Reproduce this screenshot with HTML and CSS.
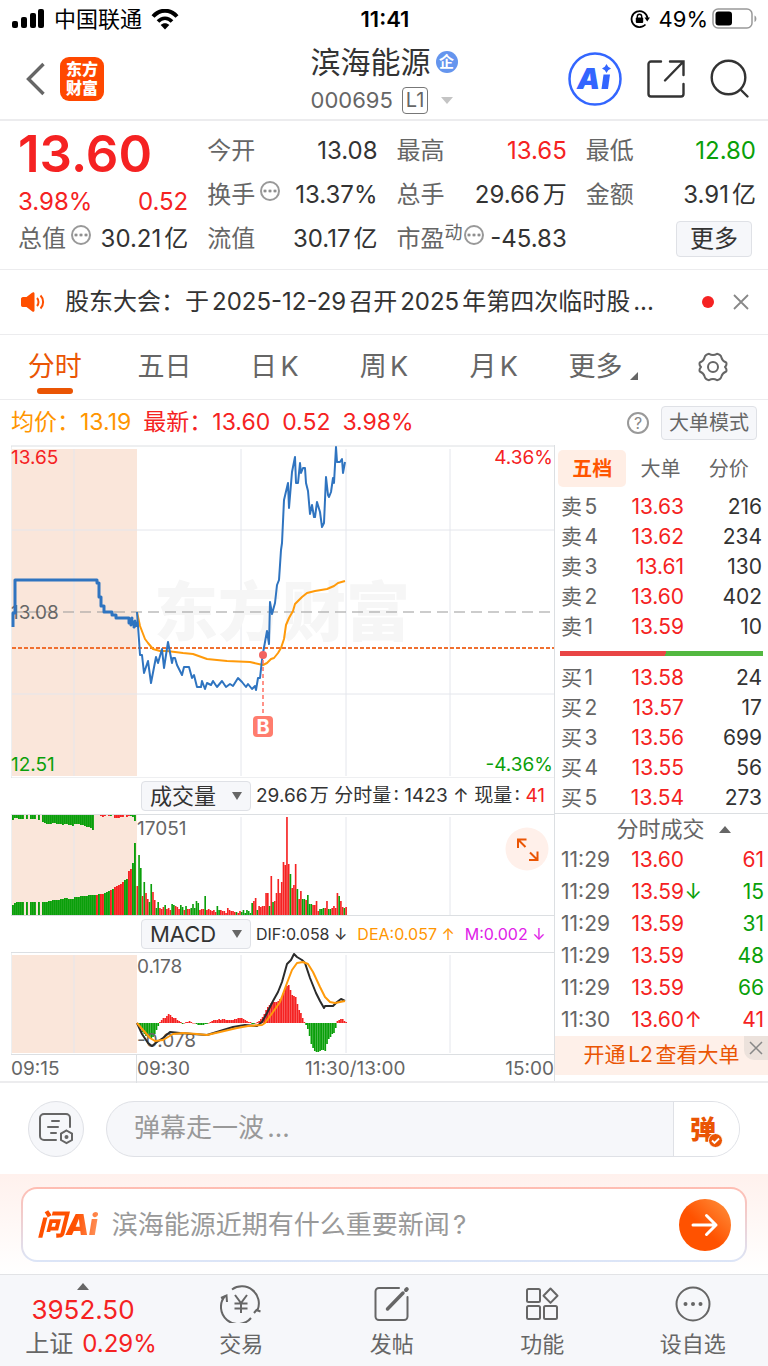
FILE: index.html
```
<!DOCTYPE html>
<html lang="zh-CN">
<head>
    <meta charset="UTF-8">
    <meta name="viewport" content="width=device-width, initial-scale=1.0">
    <title>滨海能源 000695</title>
    <link rel="stylesheet" href="styles.css">
</head>
<body>
    <div class="status-bar">
        <div class="status-left">
            <svg width="33" height="20" viewBox="0 0 33 20"><rect x="0" y="12" width="6" height="7" rx="2"/><rect x="9" y="8" width="6" height="11" rx="2"/><rect x="18" y="4" width="6" height="15" rx="2"/><rect x="26" y="0" width="6" height="19" rx="2"/></svg>
            <span>中国联通</span>
            <svg width="28" height="21" viewBox="0 0 28 21"><path d="M2 7.500C9-.2 19-.2 26 7.500" fill="none" stroke="#000" stroke-width="4"/><path d="M7 12.500c4-4.300 10-4.300 14 0" fill="none" stroke="#000" stroke-width="3.600"/><path d="M14 20.500l-4.300-4.500c2.400-2.200 6.200-2.200 8.600 0z"/></svg>
        </div>
        <strong class="clock">11:41</strong>
        <div class="status-right">
            <svg width="20" height="20" viewBox="0 0 20 20"><path d="M15.500 15.500A8 8 0 1 1 17.500 9M14 16.800A8 8 0 0 1 10 18" fill="none" stroke="#000" stroke-width="1.800"/><path d="M14.500 8.500h5.500l-2.800 4z"/><rect x="5.800" y="8.500" width="7.400" height="5.500" rx="1"/><path d="M7.300 9V7.400a2.200 2.200 0 0 1 4.400 0V9" fill="none" stroke="#000" stroke-width="1.400"/></svg>
            <span>49%</span>
            <svg width="46" height="22" viewBox="0 0 46 22"><rect x="1" y="1" width="39" height="19" rx="5" fill="none" stroke="#999" stroke-width="1.500"/><rect x="3.500" y="3.500" width="16.500" height="14" rx="3"/><path d="M42.500 7.500c2.500 1 2.500 5.500 0 6.500z" fill="#999"/></svg>
        </div>
    </div>

    <header class="header">
        <div class="header-left">
            <button class="icon-btn" aria-label="返回"><svg width="20" height="34" viewBox="0 0 20 34"><path d="M17.500 2L2.500 17l15 15" fill="none" stroke="#666" stroke-width="3.400"/></svg></button>
            <a href="#" class="brand"><span>东方</span><span>财富</span></a>
        </div>
        <div class="stock">
            <h1 class="stock-name">滨海能源<span class="badge">企</span></h1>
            <div class="stock-code">000695<span class="level">L1</span><i class="caret"></i></div>
        </div>
        <div class="header-right">
            <button class="icon-btn ai-btn" aria-label="Ai"><svg width="54" height="54" viewBox="0 0 54 54"><circle cx="27" cy="27" r="25.500" fill="none" stroke="#36f" stroke-width="2.500"/><text x="9" y="37" class="ai-text">A</text><path d="M35.500 22.500h6.500l-2 14.500h-6.500z" fill="#36f"/><path d="M38.500 12l1.700 2.800 2.800 1.700-2.800 1.700-1.700 2.800-1.700-2.800-2.800-1.700 2.800-1.700z" fill="#36f"/></svg></button>
            <button class="icon-btn" aria-label="分享"><svg width="38" height="38" viewBox="0 0 38 38" fill="none" stroke="#333" stroke-width="2.400" stroke-linecap="round"><path d="M14 1.500H4a2.500 2.500 0 0 0-2.500 2.500v30A2.500 2.500 0 0 0 4 36.500h30a2.500 2.500 0 0 0 2.500-2.500V24M23 1.500h13.500V15M36 2L18 20.500"/></svg></button>
            <button class="icon-btn" aria-label="搜索"><svg width="40" height="40" viewBox="0 0 40 40" fill="none" stroke="#333" stroke-width="2.400" stroke-linecap="round"><circle cx="18.500" cy="18.500" r="16.800"/><path d="M31 31l6.500 6.500"/></svg></button>
        </div>
    </header>

    <section class="quote">
        <div class="price-block up">
            <div class="price">13.60</div>
            <div class="change"><span>3.98%</span><span>0.52</span></div>
        </div>
        <div class="cell"><span class="label">今开</span><span>13.08</span></div>
        <div class="cell"><span class="label">最高</span><span class="up">13.65</span></div>
        <div class="cell"><span class="label">最低</span><span class="down">12.80</span></div>
        <div class="cell"><span class="label">换手<i class="dots"></i></span><span>13.37%</span></div>
        <div class="cell"><span class="label">总手</span><span>29.66万</span></div>
        <div class="cell"><span class="label">金额</span><span>3.91亿</span></div>
        <div class="cell"><span class="label">总值<i class="dots"></i></span><span>30.21亿</span></div>
        <div class="cell"><span class="label">流值</span><span>30.17亿</span></div>
        <div class="cell"><span class="label">市盈<sup>动</sup><i class="dots"></i></span><span>-45.83</span></div>
        <div class="cell cell-more"><button class="more-btn">更多</button></div>
    </section>

    <section class="notice">
        <svg width="26" height="20" viewBox="0 0 26 20"><path d="M1 6.500a2 2 0 0 1 2-1.500h3.500L12 .800c1.500-1 2.500-.5 2.500 1v16.400c0 1.500-1 2-2.500 1L6.500 15H3a2 2 0 0 1-2-1.500z" fill="#ff4f00"/><path d="M17 6c2 2 2 6 0 8M20.500 3.500c3.500 3.500 3.500 9.500 0 13" fill="none" stroke="#ff4f00" stroke-width="2"/></svg>
        <a href="#" class="notice-text">股东大会：于2025-12-29召开2025年第四次临时股...</a>
        <span class="red-dot"></span>
        <button class="icon-btn" aria-label="关闭"><svg width="16" height="16" viewBox="0 0 16 16"><path d="M1 1l14 14M15 1L1 15" stroke="#888" stroke-width="1.800"/></svg></button>
    </section>

    <nav class="tabs">
        <button class="tab active">分时</button>
        <button class="tab">五日</button>
        <button class="tab">日K</button>
        <button class="tab">周K</button>
        <button class="tab">月K</button>
        <button class="tab">更多<svg class="corner" width="8" height="8" viewBox="0 0 8 8"><path d="M8 0v8H0z" fill="#666"/></svg></button>
        <button class="tab" aria-label="设置"><svg width="30" height="30" viewBox="0 0 30 30" fill="none" stroke="#666" stroke-width="2"><path d="M11 1.800q4 2.400 8 0 4 .800 4.500 4 .8 3.200 4.700 4.700 1 2.200-1.200 4.500 2.200 2.300 1.200 4.500-3.900 1.500-4.700 4.700-.5 3.200-4.500 4-4-2.400-8 0-4-.8-4.500-4-.8-3.200-4.700-4.700Q.8 17.300 3 15 .8 12.700 1.800 10.500q3.900-1.500 4.700-4.700.5-3.200 4.500-4z" stroke-linejoin="round"/><circle cx="15" cy="15" r="5"/></svg></button>
    </nav>

    <div class="summary">
        <span class="avg">均价：13.19</span>
        <span class="up">最新：13.60</span>
        <span class="up">0.52</span>
        <span class="up">3.98%</span>
        <button class="icon-btn help" aria-label="帮助">?</button>
        <button class="mode-btn">大单模式</button>
    </div>

    <main class="market">
        <div class="charts">
            <svg class="chart" viewBox="0 0 543 333">
                <path class="frame" d="M0 1H543M0 333H543M0 1V333"/>
                <rect class="pre" x="1" y="4" width="125" height="327"/>
                <path class="grid" d="M63 4V331M230 4V331M335 4V331M439 4V331M1 85H543M1 249H543"/>
                <text class="watermark" x="143" y="190">东方财富</text>
                <path class="base-line" d="M1 167H543"/>
                <text class="axis-text" x="0" y="174">13.08</text>
                <path class="cost-line" d="M1 203H543"/>
                <path class="avg-line" d="M126 167L129 181 134 194 137 198 142 204 149 206 156 206 172 208 182 209 196 214 216 216 239 217 252 220 256 218 260 214 263 213 267 208 270 203 273 194 275 180 278 173 282 166 284 159 291 152 296 148 304 146 316 144 323 141 327 138 334 136"/>
                <path class="pre-line" d="M2 182V168H4V135H86V138H88V152H90V161H93V167H101V170H105V173H118V178L121 173 120 180 124 176 123 182 126 178V182"/>
                <path class="price-line" d="M126 167L128 195 129 210 131 210 133 228 137 216 140 238 145 212 147 218 151 204 153 223 157 197 161 218 162 213 164 213 166 220 171 230 173 222 178 222 181 233 183 230 186 242 190 242 191 236 194 244 196 238 200 240 202 236 206 242 211 236 215 242 219 239 222 241 227 233 231 237 235 242 237 239 241 244 244 241 245 245 247 233 249 233 251 215 252 208 256 186 258 199 259 157 261 169 264 158 266 140 268 135 270 105 271 98 273 55 277 38 278 63 281 27 284 12 285 38 287 38 289 18 290 28 292 23 294 23 295 38 297 46 299 69 301 60 303 72 304 72 306 57 309 67 311 82 313 78 315 32 317 50 318 52 320 47 322 33 323 38 325 2 326 17 329 17 331 14 332 28 334 17"/>
                <circle cx="252" cy="210" r="4" fill="#f2635f"/>
                <path d="M252 215V271" stroke="#ff6f61" stroke-width="1.500" stroke-dasharray="4 3"/>
                <rect x="242" y="271" width="20" height="21" rx="4" fill="#ff7d6e"/>
                <text class="buy-mark" x="252" y="289">B</text>
                <text class="axis-text up" x="0" y="19">13.65</text>
                <text class="axis-text up end" x="542" y="19">4.36%</text>
                <text class="axis-text down" x="0" y="326">12.51</text>
                <text class="axis-text down end" x="542" y="326">-4.36%</text>
            </svg>

            <div class="indicator">
                <label class="picker"><select aria-label="指标一"><option>成交量</option></select></label>
                <span>29.66万 分时量: 1423 ↑ 现量: <b class="up">41</b></span>
            </div>
            <svg class="chart" viewBox="0 0 543 102">
                <rect class="pre" x="1" y="1" width="125" height="101"/>
                <path class="grid" d="M63 3V102M230 3V102M335 3V102M439 3V102"/>
                <g id="preBars"></g>
                <g id="volumeBars"></g>
                <path class="frame" d="M0 0.500H543M0 101.500H543M0 0V102"/>
                <text class="axis-text" x="126" y="21">17051</text>
                <circle cx="516" cy="35" r="21.500" fill="#fff0ea"/>
                <path d="M507 34V25.500h8.500M507 25.500l7.500 7.500M518 46h8.500V37.500M526.500 46l-7.500-7.500" fill="none" stroke="#ea5504" stroke-width="2"/>
            </svg>

            <div class="indicator small">
                <label class="picker"><select aria-label="指标二"><option>MACD</option></select></label>
                <span>DIF:0.058 ↓</span>
                <span class="avg">DEA:0.057 ↑</span>
                <span class="macd">M:0.002 ↓</span>
            </div>
            <svg class="chart" viewBox="0 0 543 103">
                <path class="frame" d="M0 0.500H543M0 102.500H543M0 0V102"/>
                <rect class="pre" x="1" y="3" width="125" height="98"/>
                <path class="grid" d="M63 3V101M230 3V101M335 3V101M439 3V101"/>
                <g id="macdBars"></g>
                <text class="axis-text" x="126" y="21">0.178</text>
                <text class="axis-text" x="126" y="95">-0.078</text>
                <path class="dif-line" d="M126 71L131 82 137 91 141 94 146 90 152 86 159 80 169 81 182 82 196 83 209 79 222 75 234 73 246 74 251 70 256 61 262 49 267 40 271 30 276 12 280 8 283 2 286 5 291 8 294 11 299 26 305 41 309 49 313 56 314 54 322 54 326 50 330 47 334 49"/>
                <path class="avg-line" d="M126 71L132 78 139 86 144 89 152 88 162 82 172 81 186 82 196 83 209 80 226 76 237 74 251 73 254 71 262 60 269 50 276 31 281 18 286 11 292 10 297 12 302 20 309 35 314 45 319 50 324 51 329 50 334 49"/>
            </svg>
            <div class="time-axis"><span>09:15</span><span>09:30</span><span>11:30/13:00</span><span>15:00</span></div>
        </div>

        <aside class="side">
            <div class="side-tabs">
                <button class="side-tab active">五档</button>
                <button class="side-tab">大单</button>
                <button class="side-tab">分价</button>
            </div>
            <table class="book">
                <tr><th>卖5</th><td class="up">13.63</td><td>216</td></tr>
                <tr><th>卖4</th><td class="up">13.62</td><td>234</td></tr>
                <tr><th>卖3</th><td class="up">13.61</td><td>130</td></tr>
                <tr><th>卖2</th><td class="up">13.60</td><td>402</td></tr>
                <tr><th>卖1</th><td class="up">13.59</td><td>10</td></tr>
            </table>
            <div class="ratio"></div>
            <table class="book">
                <tr><th>买1</th><td class="up">13.58</td><td>24</td></tr>
                <tr><th>买2</th><td class="up">13.57</td><td>17</td></tr>
                <tr><th>买3</th><td class="up">13.56</td><td>699</td></tr>
                <tr><th>买4</th><td class="up">13.55</td><td>56</td></tr>
                <tr><th>买5</th><td class="up">13.54</td><td>273</td></tr>
            </table>
            <button class="deals-title">分时成交<i class="caret-up"></i></button>
            <table class="book deals">
                <tr><th>11:29</th><td class="up">13.60</td><td class="arrow"></td><td class="up">61</td></tr>
                <tr><th>11:29</th><td class="up">13.59</td><td class="arrow down">↓</td><td class="down">15</td></tr>
                <tr><th>11:29</th><td class="up">13.59</td><td class="arrow"></td><td class="down">31</td></tr>
                <tr><th>11:29</th><td class="up">13.59</td><td class="arrow"></td><td class="down">48</td></tr>
                <tr><th>11:29</th><td class="up">13.59</td><td class="arrow"></td><td class="down">66</td></tr>
                <tr><th>11:30</th><td class="up">13.60</td><td class="arrow up">↑</td><td class="up">41</td></tr>
            </table>
            <div class="promo">
                <a href="#">开通L2查看大单</a>
                <button class="promo-close" aria-label="关闭"><svg width="14" height="14" viewBox="0 0 14 14"><path d="M1 1l12 12M13 1L1 13" stroke="#888" stroke-width="1.500"/></svg></button>
            </div>
        </aside>
    </main>

    <section class="composer">
        <button class="round-btn" aria-label="弹幕设置"><svg width="36" height="34" viewBox="0 0 36 34" fill="none" stroke="#666" stroke-width="2" stroke-linecap="round"><path d="M18 28H6a4 4 0 0 1-4-4V6a4 4 0 0 1 4-4h22a4 4 0 0 1 4 4v9M14 9h7M10 15h10M13 21h5"/><path d="M28.500 18.500l5.500 3.200v6.300l-5.500 3.200-5.500-3.200v-6.300z"/><circle cx="28.500" cy="25" r="1" fill="#666"/></svg></button>
        <div class="danmu">
            <input type="text" placeholder="弹幕走一波..." aria-label="弹幕">
            <button class="danmu-btn">弹<svg width="15" height="15" viewBox="0 0 15 15"><circle cx="7.500" cy="7.500" r="7" fill="#ea5504" stroke="#fff"/><path d="M4 7.500l2.500 2.500 4.500-4.500" fill="none" stroke="#fff" stroke-width="1.800"/></svg></button>
        </div>
    </section>

    <section class="ask">
        <div class="ask-card">
            <span class="ask-logo">问Ai</span>
            <input type="text" placeholder="滨海能源近期有什么重要新闻?" aria-label="问Ai">
            <button class="send" aria-label="发送"><svg width="28" height="24" viewBox="0 0 28 24"><path d="M2 12h23M15.500 2.500L25 12l-9.500 9.500" fill="none" stroke="#fff" stroke-width="3" stroke-linecap="round" stroke-linejoin="round"/></svg></button>
        </div>
    </section>

    <nav class="bottom-nav">
        <a href="#" class="index-item">
            <i class="caret-up"></i>
            <span class="index-value up">3952.50</span>
            <span class="index-name">上证<span class="up">0.29%</span></span>
        </a>
        <a href="#" class="nav-item"><svg width="42" height="38" viewBox="0 0 42 38" fill="none" stroke="#666" stroke-width="2"><path d="M12 4.500A17 17 0 0 1 37.500 25M31 33A17 17 0 0 1 5 11M1 13l5.500-2.500L7 17M34 28l2.500-3 4 1.500"/><path d="M15 10l6 8 6-8M21 18v10M14.500 18.500h13M14.500 23.500h13"/></svg>交易</a>
        <a href="#" class="nav-item"><svg width="38" height="38" viewBox="0 0 38 38" fill="none" stroke="#666" stroke-width="2" stroke-linecap="round"><path d="M26 3H6a3.500 3.500 0 0 0-3.500 3.500v25A3.500 3.500 0 0 0 6 35h25a3.500 3.500 0 0 0 3.500-3.500V12"/><path d="M14.500 24L30 8" stroke-width="3.500"/><path d="M33 5l.8-.8" stroke-width="4"/></svg>发帖</a>
        <a href="#" class="nav-item"><svg width="38" height="38" viewBox="0 0 38 38" fill="none" stroke="#666" stroke-width="2"><rect x="4" y="4" width="13" height="13" rx="1.500"/><rect x="4" y="21" width="13" height="13" rx="1.500"/><rect x="21" y="21" width="13" height="13" rx="1.500"/><path d="M27.500 3.500l7 7.200-7 7.200-7-7.200z" stroke-linejoin="round"/></svg>功能</a>
        <a href="#" class="nav-item"><svg width="38" height="38" viewBox="0 0 38 38"><circle cx="19" cy="19" r="16.500" fill="none" stroke="#666" stroke-width="2"/><g fill="#666"><circle cx="11.500" cy="19" r="2"/><circle cx="19" cy="19" r="2"/><circle cx="26.500" cy="19" r="2"/></g></svg>设自选</a>
    </nav>

    <script src="chart.js"></script>
</body>
</html>
```
FILE: styles.css
```
* {
    box-sizing: border-box;
}
body {
    margin: 0;
    background: #fff;
    color: #333;
    font-family: Inter, "Noto Sans CJK SC", sans-serif;
    font-size: 24px;
    line-height: 1.5;
    text-autospace: normal;
}
button, input, select {
    font: inherit;
    color: inherit;
}
button {
    border: 0;
    padding: 0;
    background: none;
}
a {
    color: inherit;
    text-decoration: none;
}
svg {
    display: block;
    flex: none;
}
.icon-btn {
    display: flex;
    align-items: center;
    justify-content: center;
}
.up {
    color: #f52222;
    fill: #f52222;
}
.down {
    color: #0a9f0a;
    fill: #0a9f0a;
}
.avg {
    color: #ff9500;
}
.macd {
    color: #e020e8;
}

/* status bar */
.status-bar {
    display: grid;
    grid-template-columns: 1fr auto 1fr;
    align-items: center;
    height: 38px;
    padding: 0 10px 0 12px;
    color: #000;
    font-size: 22px;
}
.status-left, .status-right {
    display: flex;
    align-items: center;
    gap: 9px;
}
.status-right {
    justify-content: flex-end;
}
.status-right span {
    margin-right: -5px;
}
.clock {
    font-weight: 600;
}

/* header */
.header {
    display: grid;
    grid-template-columns: 1fr auto 1fr;
    align-items: center;
    height: 83px;
    padding: 0 18px;
    border-bottom: 2px solid #ececee;
}
.header-left, .header-right {
    display: flex;
    align-items: center;
    gap: 14px;
}
.header-left {
    padding-left: 8px;
}
.header-right {
    justify-content: flex-end;
    gap: 25px;
}
.brand {
    display: flex;
    flex-direction: column;
    align-items: center;
    justify-content: center;
    width: 44px;
    height: 44px;
    border-radius: 9px;
    background: #ff4800;
    color: #fff;
    font-size: 16px;
    font-weight: 900;
    line-height: 19px;
}
.brand span {
    height: 19px;
}
.stock {
    padding-top: 3px;
}
.stock-name {
    display: flex;
    align-items: center;
    gap: 5px;
    margin: 0;
    font-size: 30px;
    font-weight: 400;
    line-height: 40px;
}
.badge {
    width: 22px;
    height: 22px;
    border-radius: 50%;
    background: #6595ee;
    color: #fff;
    font-size: 15px;
    font-weight: 700;
    line-height: 21px;
    text-align: center;
}
.stock-code {
    display: flex;
    align-items: center;
    color: #666;
    font-size: 22px;
    line-height: 36px;
}
.level {
    margin: 0 13px 0 9px;
    padding: 0 3px;
    border: 1px solid #777;
    border-radius: 4px;
    font-size: 20px;
    line-height: 25px;
}
.caret {
    border: 6px solid transparent;
    border-top: 7px solid #c4c4c4;
    border-bottom: 0;
}
.ai-text {
    fill: #36f;
    font-size: 29px;
    font-weight: 900;
    font-style: italic;
}

/* quote */
.quote {
    display: grid;
    grid-template-columns: repeat(4, 1fr);
    grid-auto-rows: 44px;
    column-gap: 19px;
    padding: 8px 12px 8px 18px;
    border-bottom: 1px solid #ececee;
}
.price-block {
    grid-row: span 2;
}
.price {
    font-size: 51px;
    font-weight: 600;
    line-height: 50px;
}
.change {
    display: flex;
    justify-content: space-between;
    line-height: 46px;
}
.cell {
    display: flex;
    align-items: center;
    justify-content: space-between;
    line-height: 44px;
    white-space: nowrap;
}
.label {
    display: flex;
    align-items: center;
    color: #666;
}
.label sup {
    margin-bottom: 12px;
    font-size: 18px;
    line-height: 24px;
}
.dots {
    width: 20px;
    height: 20px;
    margin: 0 0 8px 5px;
    border: 2px solid #999;
    border-radius: 50%;
    background: radial-gradient(circle, #888 1px, transparent 2px) center / 5px 16px repeat-x;
}
sup + .dots {
    margin-left: 1px;
}
.cell-more {
    justify-content: flex-end;
}
.more-btn {
    width: 76px;
    height: 36px;
    margin-right: 4px;
    border: 1px solid #dfe1e6;
    border-radius: 4px;
    background: #f6f7fa;
    line-height: 34px;
}

/* notice */
.notice {
    display: flex;
    align-items: center;
    height: 65px;
    padding: 0 19px 0 20px;
    border-bottom: 1px solid #ececee;
}
.notice-text {
    flex: 1;
    margin: 0 19px;
    overflow: hidden;
    text-overflow: ellipsis;
    white-space: nowrap;
}
.red-dot {
    width: 12px;
    height: 12px;
    margin-right: 19px;
    border-radius: 50%;
    background: #f52222;
}

/* period tabs */
.tabs {
    display: grid;
    grid-template-columns: repeat(7, 1fr);
    height: 65px;
    border-bottom: 1px solid #ececee;
}
.tab {
    position: relative;
    display: flex;
    align-items: center;
    justify-content: center;
    color: #666;
    font-size: 27px;
}
.tab.active {
    color: #ea5504;
}
.tab.active::after {
    content: "";
    position: absolute;
    bottom: 5px;
    left: calc(50% - 18px);
    width: 36px;
    height: 6px;
    border-radius: 3px;
    background: #ea5504;
}
.corner {
    align-self: flex-end;
    margin: 0 0 19px 8px;
}

/* summary */
.summary {
    display: flex;
    align-items: center;
    gap: 12px;
    height: 45px;
    padding: 0 11px;
    font-size: 23px;
}
.help {
    width: 22px;
    height: 22px;
    margin-left: auto;
    border: 2px solid #999;
    border-radius: 50%;
    color: #888;
    font-size: 16px;
}
.mode-btn {
    height: 34px;
    padding: 0 7px;
    border: 1px solid #dfe1e6;
    border-radius: 4px;
    background: #f6f7fa;
    color: #666;
    font-size: 20px;
    line-height: 32px;
}

/* charts */
.market {
    display: grid;
    grid-template-columns: 1fr 214px;
    padding-left: 11px;
    border-bottom: 2px solid #ececee;
}
.chart {
    width: 100%;
    height: auto;
}
.frame, .grid {
    fill: none;
    stroke: #e4e6ec;
    stroke-width: 1;
}
.frame {
    stroke: #dcdfe2;
}
.pre {
    fill: #fae6da;
}
.watermark {
    fill: #f6f6f6;
    font-size: 64px;
    font-weight: 900;
}
.base-line {
    stroke: #999;
    stroke-dasharray: 11 6;
}
.cost-line {
    stroke: #f07030;
    stroke-width: 2;
    stroke-dasharray: 4 2;
}
.avg-line, .price-line, .pre-line, .dif-line {
    fill: none;
    stroke: #ff9a0a;
    stroke-width: 2;
    stroke-linejoin: round;
}
.price-line {
    stroke: #2f74c0;
}
.pre-line {
    stroke: #2f74c0;
    stroke-width: 3;
}
.dif-line {
    stroke: #2b2b2b;
}
.axis-text {
    font-size: 19px;
}
.axis-text:not(.up):not(.down) {
    fill: #666;
}
.end {
    text-anchor: end;
}
.buy-mark {
    fill: #fff;
    font-size: 20px;
    font-weight: 700;
    text-anchor: middle;
}
.bar-up {
    fill: #f52222;
}
.bar-down {
    fill: #0a9f0a;
}
.indicator {
    display: flex;
    align-items: center;
    gap: 5px;
    height: 36px;
    padding-left: 130px;
    font-size: 19px;
    white-space: nowrap;
}
.indicator b {
    font-weight: 400;
}
.indicator.small {
    font-size: 16px;
}
.indicator.small span + span {
    margin-left: 5px;
}
.picker {
    position: relative;
}
.picker::after {
    content: "";
    position: absolute;
    top: 11px;
    right: 9px;
    border: 5px solid transparent;
    border-top: 8px solid #666;
    border-bottom: 0;
}
.picker select {
    display: block;
    width: 110px;
    height: 30px;
    padding: 0 8px;
    appearance: none;
    border: 1px solid #dfe1e6;
    border-radius: 4px;
    background: #f6f7fa;
    font-size: 22px;
    line-height: 28px;
}
.time-axis {
    display: grid;
    grid-template-columns: 125fr 169fr 104fr 145fr;
    height: 26px;
    color: #666;
    font-size: 19px;
    line-height: 28px;
    white-space: nowrap;
}
.time-axis span:nth-child(2) {
    border-left: 1px solid #dcdfe2;
}
.time-axis span:last-child {
    text-align: right;
}

/* order book */
.side {
    display: flex;
    flex-direction: column;
    border-left: 1px solid #dcdfe2;
    font-size: 21px;
}
.side-tabs {
    display: grid;
    grid-template-columns: repeat(3, 1fr);
    margin: 0 5px 5px 3px;
    padding-top: 5px;
    font-size: 20px;
}
.side-tab {
    height: 37px;
    border-radius: 5px;
    color: #666;
}
.side-tab.active {
    background: #ffeee5;
    color: #ff5500;
    font-weight: 700;
}
.book {
    width: 100%;
    border-collapse: collapse;
    table-layout: fixed;
    line-height: 30px;
}
.book tr {
    height: 30px;
}
.book th {
    width: 60px;
    padding: 0 0 0 6px;
    color: #666;
    font-weight: 400;
    text-align: left;
    white-space: nowrap;
}
.book td {
    padding: 0 6px 0 0;
    text-align: right;
}
.book td:nth-child(2) {
    width: 69px;
    padding: 0;
}
.ratio {
    height: 5px;
    margin: 9px 5px 7px 5px;
    background: linear-gradient(110deg, #e94545 52%, #53b840 52%);
}
.deals-title {
    display: flex;
    align-items: center;
    justify-content: center;
    height: 31px;
    padding-left: 24px;
    border-top: 1px solid #dcdfe2;
    color: #666;
    font-size: 22px;
    line-height: 30px;
}
.caret-up {
    margin-left: 14px;
    border: 6px solid transparent;
    border-top: 0;
    border-bottom: 7px solid #666;
}
.deals tr {
    height: 32px;
}
.deals .arrow {
    width: 18px;
    padding: 0;
}
.deals td:last-child {
    padding-right: 4px;
}
.promo {
    position: relative;
    height: 39px;
    background: #fef0e9;
    color: #ea5504;
    line-height: 38px;
    text-align: center;
}
.promo-close {
    position: absolute;
    top: 0;
    right: 0;
    display: flex;
    align-items: center;
    justify-content: center;
    width: 24px;
    height: 24px;
    border-bottom-left-radius: 10px;
    background: #ece2dc;
}

/* composer */
.composer {
    display: flex;
    gap: 22px;
    padding: 18px 28px 17px;
}
.round-btn {
    display: flex;
    align-items: center;
    justify-content: center;
    width: 56px;
    height: 56px;
    border: 1px solid #dfe1e6;
    border-radius: 50%;
    background: #f6f7fa;
}
.danmu {
    display: flex;
    flex: 1;
    height: 56px;
    overflow: hidden;
    border: 1px solid #dfe1e6;
    border-radius: 28px;
    background: #f6f7fa;
}
.danmu input {
    flex: 1;
    min-width: 0;
    padding: 0 27px 4px;
    border: 0;
    background: none;
    font-size: 26px;
}
input::placeholder {
    color: #999;
}
.danmu-btn {
    display: flex;
    align-items: center;
    justify-content: center;
    width: 66px;
    border-left: 1px solid #dfe1e6;
    background: #fff;
    color: #ea5504;
    font-size: 26px;
    font-weight: 900;
}
.danmu-btn svg {
    margin: 22px 0 0 -8px;
}

/* ask */
.ask {
    padding: 13px 21px 12px;
    background: linear-gradient(#fff1ed, #fff);
}
.ask-card {
    display: flex;
    align-items: center;
    height: 75px;
    padding: 0 14px;
    border: 2px solid transparent;
    border-radius: 16px;
    background: linear-gradient(#fff, #fff) padding-box, linear-gradient(#ffbdb2, #dbe5f7) border-box;
}
.ask-logo {
    margin-right: 14px;
    background: linear-gradient(100deg, #ff5000 60%, #ff9a66);
    background-clip: text;
    color: transparent;
    font-size: 29px;
    font-weight: 900;
    font-style: italic;
    text-autospace: no-autospace;
}
.ask-card input {
    flex: 1;
    min-width: 0;
    padding: 0;
    border: 0;
    background: none;
    font-size: 26px;
}
.send {
    display: flex;
    align-items: center;
    justify-content: center;
    width: 52px;
    height: 52px;
    border-radius: 50%;
    background: linear-gradient(45deg, #ff5200 45%, #ff9440);
}

/* bottom nav */
.bottom-nav {
    display: grid;
    grid-template-columns: 166px repeat(4, 1fr);
    height: 92px;
    border-top: 1px solid #e2e3e6;
    background: #f6f7fa;
    color: #666;
}
.index-item {
    display: flex;
    flex-direction: column;
    align-items: center;
    padding-top: 8px;
    white-space: nowrap;
}
.index-item .caret-up {
    margin: 0;
}
.index-value {
    font-size: 26px;
    line-height: 40px;
}
.index-name {
    display: flex;
    gap: 9px;
    padding-left: 16px;
    line-height: 28px;
}
.nav-item {
    display: flex;
    flex-direction: column;
    align-items: center;
    gap: 5px;
    padding-top: 10px;
    font-size: 22px;
    line-height: 32px;
}
```
FILE: chart.js
```
const SVG_NS = 'http://www.w3.org/2000/svg';

// r = up, g = down, number = bar height
const volume = 'r29 g60 g47 r19 g33 r22 r16 g13 g31 r23 r15 g7 g13 r7 r6 r8 g10 r6 r7 r5 g11 g10 r9 r8 r6 g10 g8 r5 g9 r6 ' +
    'r6 g7 g11 g7 g14 g12 r5 r6 r6 g19 r5 r6 r5 r4 r5 r3 g9 g5 r5 r4 r4 r2 r7 r5 r4 r4 r3 g3 r2 r4 ' +
    'g3 g5 g2 g5 g4 g2 g12 r14 r17 g5 r9 r8 r9 r9 r22 r22 g9 r39 g13 r14 r22 r36 r22 r33 r53 r50 r98 r51 g41 r27 ' +
    'r30 r51 g26 r16 r24 g16 g16 r15 g20 g11 g11 r10 r10 r14 r4 g6 g6 g7 r7 r14 g6 g6 r7 r9 r7 r22 g19 r14 r8 g7 r8';

const preBottom = 'g10 g12 g13 g13 g13 g13 - g13 - g13 g13 g13 - g13 - g13 g13 g13 g14 g14 g15 g15 g15 g15 g16 g16 g17 g17 g16 g16 g16 g18 g18 ' +
    'g18 g19 g19 g19 g19 g20 g20 g20 g20 r20 g21 r21 r21 g22 g23 g24 r25 g26 r28 r29 r30 r31 r33 g35 g36 r44 r46 g52 g72';

const preTop = 'g5 g3 g3 g4 g4 g4 - g4 - g4 g4 g4 - g5 - g7 g8 g9 g9 g9 g8 g8 g9 g9 g9 g10 g9 g9 g10 g10 g11 g9 ' +
    'g9 g9 g10 g10 g11 g12 g12 g13 g15 - - - r1 r2 r1 - r1 g1 - r3 r3 r3 r2 r2 - r2 r1 g1 g2 g6';

const macd = [0, -2, -5, -9, -11, -13, -14, -14, -15, -14, -11, -7, -3, 1, 3, 5, 5, 7, 9, 8, 6, 5, 5, 3, 2, 1, -1, 0, 1, 1,
    2, 1, 0, 0, -1, -2, -2, -2, -2, -1, -1, 0, 1, 2, 3, 3, 3, 4, 3, 4, 4, 3, 3, 3, 3, 3, 4, 4, 5, 5,
    5, 4, 3, 2, 1, 1, -1, -1, 0, 1, 2, 4, 6, 9, 13, 16, 18, 20, 21, 21, 21, 22, 24, 26, 30, 35, 37, 38, 33, 28,
    27, 26, 19, 13, 10, 5, 1, -2, -6, -13, -21, -25, -28, -29, -29, -28, -27, -27, -28, -21, -16, -14, -11, -10, -5, 2, 3, 4, 4, 2, 1];

function addBar(group, x, y, width, height, up) {
    const rect = document.createElementNS(SVG_NS, 'rect');
    rect.setAttribute('x', x);
    rect.setAttribute('y', y);
    rect.setAttribute('width', width);
    rect.setAttribute('height', height);
    rect.setAttribute('class', up ? 'bar-up' : 'bar-down');
    group.appendChild(rect);
}

function drawBars(id, data, start, step, base, fromTop) {
    const group = document.getElementById(id);
    data.split(' ').forEach((item, i) => {
        if (item === '-') return;
        const h = Number(item.slice(1));
        addBar(group, start + i * step, fromTop ? base : base - h, step - 0.1, h, item[0] === 'r');
    });
}

drawBars('preBars', preBottom, 1, 2, 101, false);
drawBars('preBars', preTop, 1, 2, 1, true);
drawBars('volumeBars', volume, 125.5, 1.74, 101, false);

// MACD bars grow from the zero line
const macdGroup = document.getElementById('macdBars');
macd.forEach((v, i) => {
    addBar(macdGroup, 125.5 + i * 1.74, v < 0 ? 71 : 71 - v, 1.7, Math.max(Math.abs(v), 0.5), v >= 0);
});
```
